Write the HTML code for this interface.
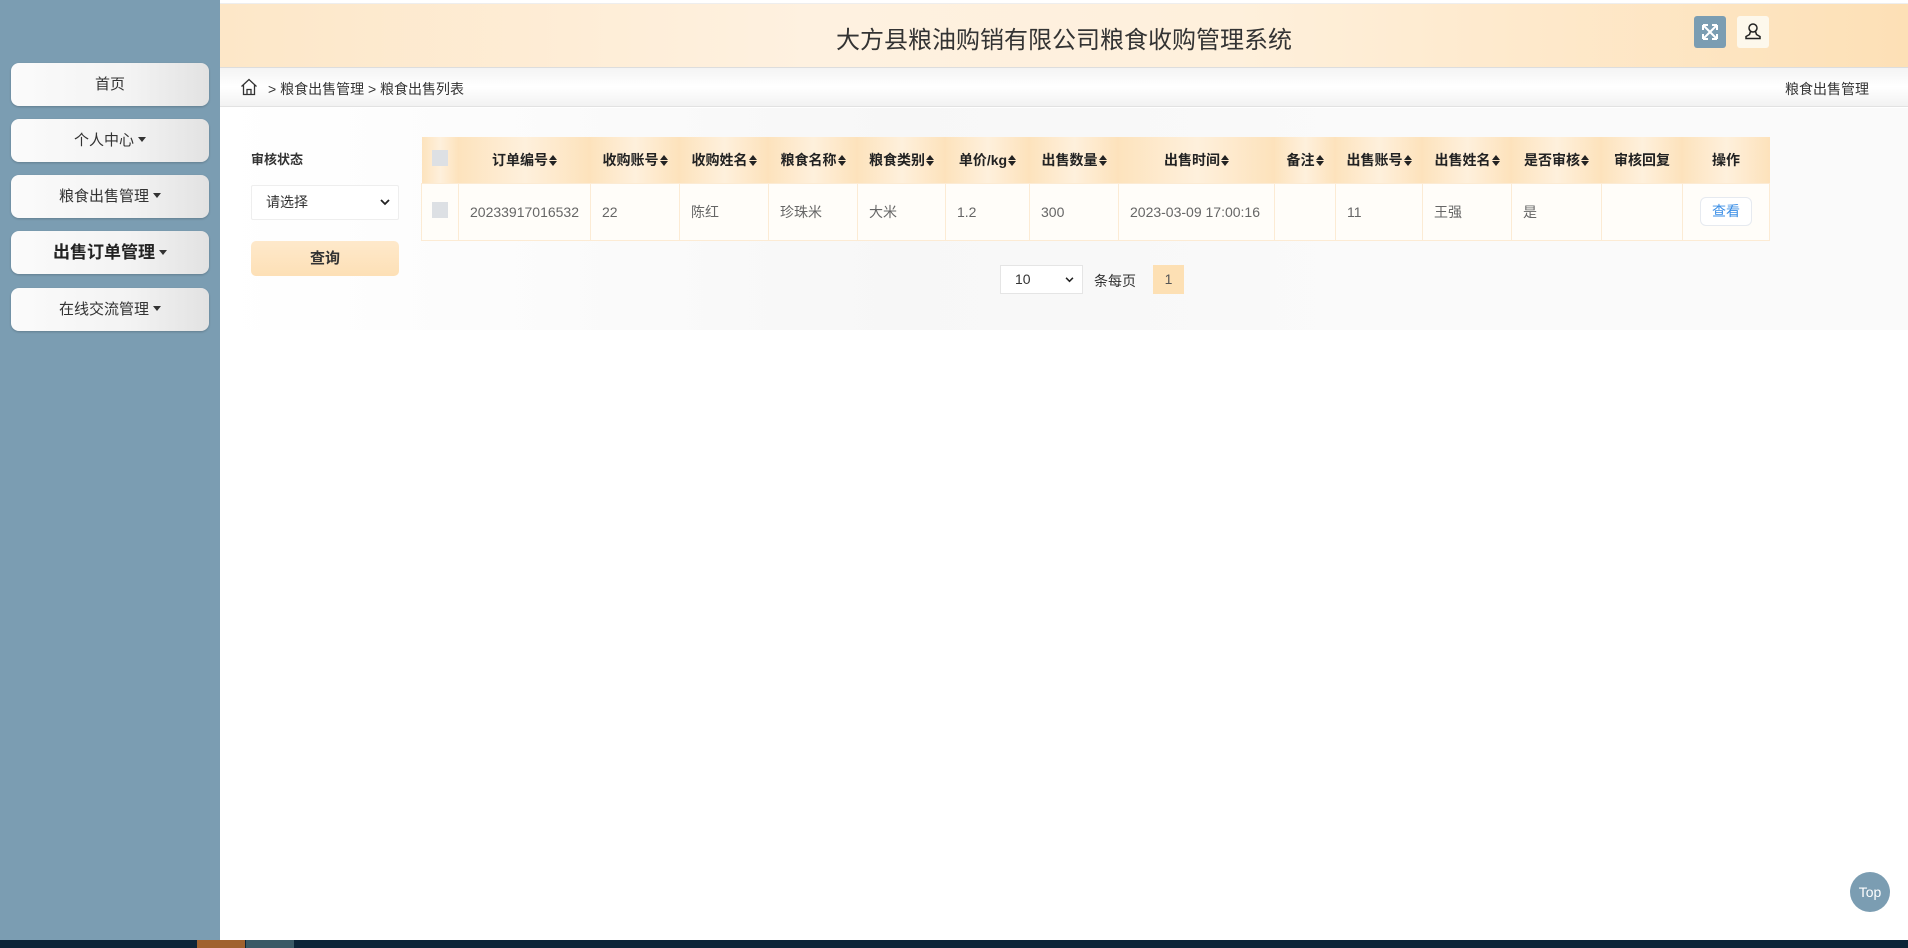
<!DOCTYPE html>
<html><head><meta charset="utf-8"><style>
*{margin:0;padding:0;box-sizing:border-box}
body{width:1908px;height:948px;overflow:hidden;background:#fff;font-family:"Liberation Sans","Noto Sans CJK SC",sans-serif;position:relative}
.side{position:absolute;left:0;top:0;width:220px;height:940px;background:#7b9db2}
.nb{position:absolute;left:11px;width:198px;height:43px;border-radius:8px;background:linear-gradient(90deg,#fbfbfb,#f3f3f3 60%,#e2e2e2);box-shadow:0 1px 2px rgba(0,0,0,.2);text-align:center;line-height:43px;font-size:15px;color:#333}
.car{display:inline-block;width:0;height:0;border-left:4px solid transparent;border-right:4px solid transparent;border-top:5px solid #333;vertical-align:middle;margin-left:4px;margin-top:-3px}
.hdr{position:absolute;left:220px;top:3px;width:1688px;height:64px;background:linear-gradient(90deg,#fde7c8,#fef1e0 35%,#fef0dc 60%,#fde0b6);border-top:1px solid #eee}
.title{position:absolute;left:0;width:1688px;text-align:center;top:16px;font-size:24px;color:#333}
.bc{position:absolute;left:220px;top:67px;width:1688px;height:40px;background:linear-gradient(180deg,#f4f4f4,#fff 50%,#f2f2f2);border-top:1px solid #ddd;border-bottom:1px solid #e2e2e2;font-size:14px;color:#333}
.cont{position:absolute;left:220px;top:108px;width:1688px;height:222px;background:linear-gradient(90deg,#fff,#f7f7f7 40%,#fafafa 70%,#fafafa)}
table{position:absolute;left:421px;top:137px;border-collapse:collapse;font-size:14px}
th{height:46px;background:linear-gradient(90deg,#fde3bd,#fef0dc 50%,#fde2bb);font-weight:bold;color:#222;text-align:center;font-size:14px;white-space:nowrap}
td{height:57px;background:#fffdf9;color:#666;padding-left:11px;border:1px solid #fcebd4}
.cb{display:inline-block;width:16px;height:16px;background:#dde0e4}
.so{display:inline-block;width:8px;height:11px;position:relative;vertical-align:middle;margin-left:1px;margin-top:-2px}
.so:before,.so:after{content:"";position:absolute;left:0;border-left:4px solid transparent;border-right:4px solid transparent}
.so:before{top:0;border-bottom:5px solid #222}
.so:after{bottom:0;border-top:5px solid #222}
</style></head><body>
<div class="side">
<div class="nb" style="top:63px">首页</div>
<div class="nb" style="top:119px">个人中心<span class="car"></span></div>
<div class="nb" style="top:175px">粮食出售管理<span class="car"></span></div>
<div class="nb" style="top:231px;font-size:17px;font-weight:bold;color:#222">出售订单管理<span class="car"></span></div>
<div class="nb" style="top:288px">在线交流管理<span class="car"></span></div>
</div>
<div class="hdr"><div class="title">大方县粮油购销有限公司粮食收购管理系统</div>
<div style="position:absolute;left:1474px;top:12px;width:32px;height:32px;background:#7b9db2;border-radius:3px"><svg width="32" height="32" viewBox="0 0 32 32" fill="none" stroke="#fff" stroke-width="2"><path d="M9 9l14 14M23 9L9 23M9 9h5M9 9v5M23 9h-5M23 9v5M9 23h5M9 23v-5M23 23h-5M23 23v-5"/></svg></div>
<div style="position:absolute;left:1517px;top:12px;width:32px;height:32px;background:#fdf8ec;border-radius:3px"><svg width="32" height="32" viewBox="0 0 32 32" fill="none" stroke="#222" stroke-width="1.5"><circle cx="16" cy="12" r="4"/><path d="M13.5 15.5l-1 3-3.5 2v2h14v-2l-3.5-2-1-3"/></svg></div>
</div>
<div class="bc">
<svg style="position:absolute;left:20px;top:10px" width="18" height="18" viewBox="0 0 18 18" fill="none" stroke="#333" stroke-width="1.3"><path d="M1.5 8.5L9 1.5l7.5 7M3.5 7v9.5h11V7M7 16.5v-5h4v5"/></svg>
<span style="position:absolute;left:48px;top:11px">&gt; 粮食出售管理 &gt; 粮食出售列表</span>
<span style="position:absolute;left:1565px;top:11px">粮食出售管理</span>
</div>
<div class="cont"></div>
<div style="position:absolute;left:251px;top:149px;font-size:13px;font-weight:bold;color:#333">审核状态</div>
<div style="position:absolute;left:251px;top:185px;width:148px;height:35px;background:#fff;border:1px solid #eee;border-radius:2px;font-size:14px;color:#333;line-height:33px;padding-left:14px">请选择<svg style="position:absolute;right:8px;top:13px" width="10" height="7" viewBox="0 0 10 7" fill="none" stroke="#222" stroke-width="1.8"><path d="M1 1l4 4 4-4"/></svg></div>
<div style="position:absolute;left:251px;top:241px;width:148px;height:35px;background:linear-gradient(180deg,#fee9cb,#fde0b6);border-radius:5px;text-align:center;line-height:35px;font-size:15px;font-weight:bold;color:#333">查询</div>
<table>
<tr>
<th style="width:37px"><span class="cb"></span></th>
<th style="width:132px">订单编号<span class="so"></span></th>
<th style="width:89px">收购账号<span class="so"></span></th>
<th style="width:89px">收购姓名<span class="so"></span></th>
<th style="width:89px">粮食名称<span class="so"></span></th>
<th style="width:88px">粮食类别<span class="so"></span></th>
<th style="width:84px">单价/kg<span class="so"></span></th>
<th style="width:89px">出售数量<span class="so"></span></th>
<th style="width:156px">出售时间<span class="so"></span></th>
<th style="width:61px">备注<span class="so"></span></th>
<th style="width:87px">出售账号<span class="so"></span></th>
<th style="width:89px">出售姓名<span class="so"></span></th>
<th style="width:90px">是否审核<span class="so"></span></th>
<th style="width:81px">审核回复</th>
<th style="width:87px">操作</th>
</tr>
<tr>
<td style="text-align:center;padding:0"><span class="cb"></span></td>
<td>20233917016532</td><td>22</td><td>陈红</td><td>珍珠米</td><td>大米</td><td>1.2</td><td>300</td><td>2023-03-09 17:00:16</td><td></td><td>11</td><td>王强</td><td>是</td><td></td>
<td style="padding:0;text-align:center"><span style="display:inline-block;width:52px;height:29px;border:1px solid #e6eaf0;border-radius:6px;background:#fff;color:#3a8ee6;line-height:27px;font-size:14px">查看</span></td>
</tr>
</table>
<div style="position:absolute;left:1000px;top:265px;width:83px;height:29px;border:1px solid #e5e5e5;background:#fff;font-size:14px;line-height:27px;padding-left:14px;color:#333">10<svg style="position:absolute;right:8px;top:11px" width="9" height="6" viewBox="0 0 10 7" fill="none" stroke="#222" stroke-width="1.8"><path d="M1 1l4 4 4-4"/></svg></div>
<div style="position:absolute;left:1094px;top:271px;font-size:14px;color:#333">条每页</div>
<div style="position:absolute;left:1153px;top:265px;width:31px;height:29px;background:#fde0b4;font-size:14px;line-height:29px;text-align:center;color:#555">1</div>
<div style="position:absolute;left:1850px;top:872px;width:40px;height:40px;border-radius:50%;background:#7b9db2;color:#fff;font-size:14px;line-height:40px;text-align:center">Top</div>
<div style="position:absolute;left:0;top:940px;width:1908px;height:8px;background:#0c2538"></div>
<div style="position:absolute;left:197px;top:940px;width:48px;height:8px;background:#a0622e"></div>
<div style="position:absolute;left:246px;top:940px;width:48px;height:8px;background:#3a5a66"></div>
</body></html>
